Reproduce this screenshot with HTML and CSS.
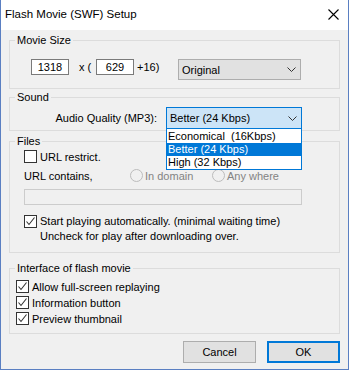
FILE: index.html
```html
<!DOCTYPE html>
<html>
<head>
<meta charset="utf-8">
<link rel="stylesheet" href="styles.css">
</head>
<body>
<div class="window">
  <div class="titlebar">
    <span class="title">Flash Movie (SWF) Setup</span>
    <svg class="close" width="11" height="11" viewBox="0 0 11 11"><path d="M0.5 0.5 L10.5 10.5 M10.5 0.5 L0.5 10.5" stroke="#000" stroke-width="1.1" fill="none"/></svg>
  </div>
  <div class="client">
    <fieldset class="group g-size">
      <legend>Movie Size</legend>
      <div class="size-row">
        <span class="edit edit-num">1318</span>
        <span class="static s-x">x (</span>
        <span class="edit edit-num">629</span>
        <span class="static s-16">+16)</span>
        <div class="combo combo-size">
          <span>Original</span>
          <svg class="chev" width="9" height="5" viewBox="0 0 9 5"><path d="M0.5 0.5 L4.5 4.5 L8.5 0.5" stroke="#333" fill="none"/></svg>
        </div>
      </div>
    </fieldset>

    <fieldset class="group g-sound">
      <legend>Sound</legend>
      <div class="sound-row">
        <span class="static s-aq">Audio Quality (MP3):</span>
        <div class="combo-wrap">
          <div class="combo combo-open">
            <span>Better (24 Kbps)</span>
            <svg class="chev" width="9" height="5" viewBox="0 0 9 5"><path d="M0.5 0.5 L4.5 4.5 L8.5 0.5" stroke="#333" fill="none"/></svg>
          </div>
          <ul class="droplist">
            <li>Economical&nbsp; (16Kbps)</li>
            <li class="sel">Better (24 Kbps)</li>
            <li>High (32 Kbps)</li>
          </ul>
        </div>
      </div>
    </fieldset>

    <fieldset class="group g-files">
      <legend>Files</legend>
      <div class="files-body">
        <label class="check-row">
          <span class="cb"></span>
          <span>URL restrict.</span>
        </label>
        <div class="url-row">
          <span class="static s-url">URL contains,</span>
          <span class="radio-item r-domain"><span class="radio"></span><span class="dis">In domain</span></span>
          <span class="radio-item r-any"><span class="radio"></span><span class="dis">Any where</span></span>
        </div>
        <div class="edit edit-wide"></div>
        <label class="check-row multi">
          <span class="cb checked"><svg width="11" height="11" viewBox="0 0 11 11"><path d="M1.5 5.5 L4 8.5 L9.5 1.5" stroke="#333" stroke-width="1.1" fill="none"/></svg></span>
          <span class="multi-text">Start playing automatically. (minimal waiting time)<br>Uncheck for play after downloading over.</span>
        </label>
      </div>
    </fieldset>

    <fieldset class="group g-iface">
      <legend>Interface of flash movie</legend>
      <div class="iface-body">
        <label class="check-row">
          <span class="cb checked"><svg width="11" height="11" viewBox="0 0 11 11"><path d="M1.5 5.5 L4 8.5 L9.5 1.5" stroke="#333" stroke-width="1.1" fill="none"/></svg></span>
          <span>Allow full-screen replaying</span>
        </label>
        <label class="check-row">
          <span class="cb checked"><svg width="11" height="11" viewBox="0 0 11 11"><path d="M1.5 5.5 L4 8.5 L9.5 1.5" stroke="#333" stroke-width="1.1" fill="none"/></svg></span>
          <span>Information button</span>
        </label>
        <label class="check-row">
          <span class="cb checked"><svg width="11" height="11" viewBox="0 0 11 11"><path d="M1.5 5.5 L4 8.5 L9.5 1.5" stroke="#333" stroke-width="1.1" fill="none"/></svg></span>
          <span>Preview thumbnail</span>
        </label>
      </div>
    </fieldset>

    <div class="buttons">
      <button class="btn">Cancel</button>
      <button class="btn btn-default">OK</button>
    </div>
  </div>
</div>
</body>
</html>
```

FILE: styles.css
```css
* { box-sizing: border-box; }

html, body {
  margin: 0;
  padding: 0;
  background: #ffffff;
}

body {
  font-family: "Liberation Sans", Arial, sans-serif;
  font-size: 11px;
  color: #000;
}

.window {
  position: relative;
  width: 349px;
  height: 370px;
  border: 1px solid #5a7fc2;
  border-top: none;
  display: flex;
  flex-direction: column;
  background: #f0f0f0;
  overflow: hidden;
}

.titlebar {
  height: 30px;
  flex: none;
  background: #ffffff;
  display: flex;
  align-items: center;
  justify-content: space-between;
  padding: 0 9px 2px 4px;
}

.title {
  font-size: 11.5px;
}

.close {
  display: block;
}

.client {
  flex: 1;
  display: flex;
  flex-direction: column;
  padding: 3px 8px 0 8px;
}

.group {
  margin: 0;
  padding: 0;
  border: 1px solid #dcdcdc;
  min-width: 0;
  flex: none;
}

.group legend {
  margin-left: 5px;
  padding: 0 2px;
  line-height: 14px;
  font-size: 11px;
}

.g-size { height: 56px; }
.g-sound { height: 41px; margin-top: 1px; }
.g-files { height: 119px; margin-top: 3px; }
.g-iface { height: 73px; margin-top: 8px; }

/* Movie size */
.size-row {
  display: flex;
  align-items: flex-start;
  margin-top: 12px;
  padding-left: 21px;
}

.edit {
  background: #ffffff;
  border: 1px solid #7a7a7a;
  height: 16px;
  line-height: 14px;
}

.edit-num {
  width: 38px;
  text-align: center;
}

.static {
  line-height: 16px;
}

.s-x {
  width: 27px;
  padding-left: 10px;
}

.s-16 {
  width: 44px;
  padding-left: 3px;
}

.combo {
  height: 21px;
  border: 1px solid #adadad;
  background: #e1e1e1;
  display: flex;
  align-items: center;
  justify-content: space-between;
  padding: 0 4px 0 3px;
}

.combo-size {
  width: 123px;
}

.chev {
  display: block;
}

/* Sound */
.sound-row {
  display: flex;
  align-items: center;
  margin-top: 3px;
}

.s-aq {
  width: 147px;
  text-align: right;
  margin-right: 9px;
}

.combo-wrap {
  position: relative;
  width: 136px;
}

.combo-open {
  height: 22px;
  border-color: #0078d7;
  background: #cce4f7;
}

.droplist {
  position: absolute;
  left: 0;
  top: 21px;
  width: 136px;
  margin: 0;
  padding: 1px 0 0 0;
  list-style: none;
  background: #ffffff;
  border: 1px solid #0078d7;
  z-index: 5;
}

.droplist li {
  height: 13px;
  line-height: 13px;
  padding-left: 1px;
}

.droplist li.sel {
  background: #0078d7;
  color: #ffffff;
}

/* Files */
.files-body {
  padding: 2px 0 0 14px;
  display: flex;
  flex-direction: column;
  align-items: flex-start;
}

.check-row {
  display: flex;
  align-items: center;
  gap: 3px;
  height: 13px;
}

.cb {
  width: 13px;
  height: 13px;
  border: 1px solid #333333;
  background: #ffffff;
  flex: none;
  display: flex;
  align-items: center;
  justify-content: center;
}

.cb svg { display: block; }

.url-row {
  display: flex;
  align-items: center;
  height: 13px;
  margin-top: 6px;
}

.s-url {
  width: 106px;
}

.radio-item {
  display: flex;
  align-items: center;
  gap: 2px;
}

.r-domain { width: 82px; }

.radio {
  width: 13px;
  height: 13px;
  border-radius: 50%;
  border: 1px solid #bcbcbc;
  background: #f0f0f0;
}

.dis {
  color: #838383;
}

.edit-wide {
  width: 278px;
  height: 16px;
  margin-top: 7px;
  border-color: #cccccc;
  background: #f0f0f0;
}

.check-row.multi {
  height: auto;
  align-items: flex-start;
  margin-top: 9px;
}

.check-row.multi .cb {
  margin-top: 1px;
}

.multi-text {
  line-height: 15px;
}

/* Interface */
.iface-body {
  padding: 5px 0 0 6px;
  display: flex;
  flex-direction: column;
  gap: 3px;
}

/* Buttons */
.buttons {
  display: flex;
  justify-content: flex-end;
  gap: 11px;
  margin-top: 7px;
}

.btn {
  width: 73px;
  height: 22px;
  margin: 0;
  padding: 0;
  font-family: "Liberation Sans", Arial, sans-serif;
  font-size: 11px;
  color: #000;
  background: #e1e1e1;
  border: 1px solid #adadad;
  border-radius: 0;
}

.btn-default {
  border: 2px solid #0078d7;
}
```
